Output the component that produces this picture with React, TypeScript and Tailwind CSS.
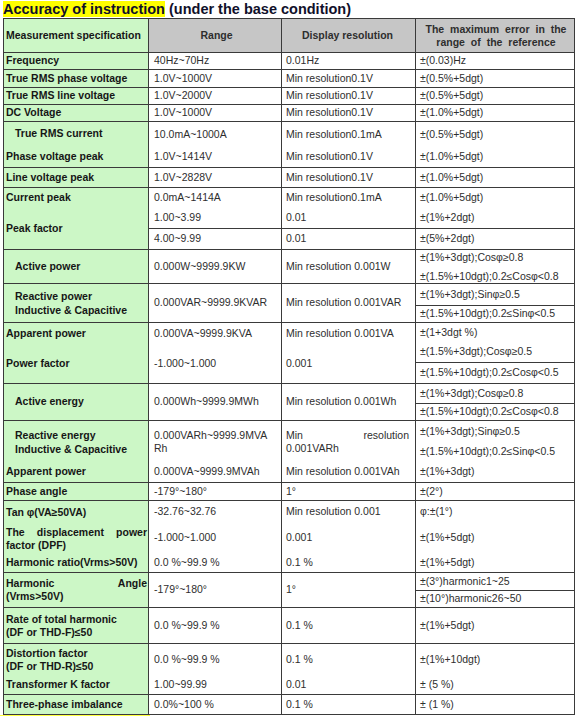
import React from "react";

type Line = { t: React.ReactNode; h?: string; b?: boolean; x?: string };
type CellSpec = React.ReactNode | Line[];
type Row = { h: string; hdr?: boolean; c: CellSpec[] };

const BORDER = "border-[#3a3a3a]";

const colCls = [
  "w-[145px] shrink-0 bg-[#ccf7c6] font-bold text-[#161616] border-r border-[#3a3a3a]",
  "w-[133px] shrink-0 border-r border-[#3a3a3a] text-[#2e2e2e]",
  "w-[134px] shrink-0 border-r border-[#3a3a3a] text-[#2e2e2e]",
  "flex-1 min-w-0 text-[#2e2e2e]",
];
const padCls = ["pl-[2px] pr-[1px]", "pl-[5px] pr-[2px]", "pl-[4px] pr-[6px]", "pl-[4px] pr-[2px]"];

const In = ({ children }: { children: React.ReactNode }) => (
  <span className="ml-[9px]">{children}</span>
);

const Two = ({ a, b, indent }: { a: React.ReactNode; b: React.ReactNode; indent?: boolean }) => (
  <div className={indent ? "leading-[14px] pl-[9px]" : "leading-[13px]"}>
    <div>{a}</div>
    <div>{b}</div>
  </div>
);

const Just = ({ words, second }: { words: string[]; second: React.ReactNode }) => (
  <div className="w-full leading-[13px]">
    <div className="flex justify-between">
      {words.map((w) => (
        <span key={w}>{w}</span>
      ))}
    </div>
    <div>{second}</div>
  </div>
);

const rows: Row[] = [
  {
    h: "h-[34px]",
    hdr: true,
    c: [
      "Measurement specification",
      [{ t: "Range", x: "justify-center" }],
      [{ t: "Display resolution", x: "justify-center" }],
      [
        {
          t: (
            <div className="w-full text-center leading-[13px] [word-spacing:3px]">
              <div>The maximum error in the</div>
              <div>range of the reference</div>
            </div>
          ),
        },
      ],
    ],
  },
  { h: "h-[17px]", c: ["Frequency", "40Hz~70Hz", "0.01Hz", "±(0.03)Hz"] },
  { h: "h-[18px]", c: ["True RMS phase voltage", "1.0V~1000V", "Min resolution0.1V", "±(0.5%+5dgt)"] },
  { h: "h-[17px]", c: ["True RMS line voltage", "1.0V~2000V", "Min resolution0.1V", "±(0.5%+5dgt)"] },
  { h: "h-[17px]", c: ["DC Voltage", "1.0V~1000V", "Min resolution0.1V", "±(1.0%+5dgt)"] },
  {
    h: "h-[46px]",
    c: [
      [{ t: <In>True RMS current</In>, h: "h-[24px]" }, { t: "Phase voltage peak" }],
      [{ t: "10.0mA~1000A", h: "h-[25px]" }, { t: "1.0V~1414V" }],
      [{ t: "Min resolution0.1mA", h: "h-[25px]" }, { t: "Min resolution0.1V" }],
      [{ t: "±(0.5%+5dgt)", h: "h-[25px]" }, { t: "±(1.0%+5dgt)" }],
    ],
  },
  { h: "h-[20px]", c: ["Line voltage peak", "1.0V~2828V", "Min resolution0.1V", "±(1.0%+5dgt)"] },
  {
    h: "h-[62px]",
    c: [
      [{ t: "Current peak", h: "h-[20px]" }, { t: "Peak factor" }],
      [{ t: "0.0mA~1414A", h: "h-[20px]" }, { t: "1.00~3.99", h: "h-[21px]", b: true }, { t: "4.00~9.99" }],
      [{ t: "Min resolution0.1mA", h: "h-[20px]" }, { t: "0.01", h: "h-[21px]", b: true }, { t: "0.01" }],
      [{ t: "±(1.0%+5dgt)", h: "h-[20px]" }, { t: "±(1%+2dgt)", h: "h-[21px]", b: true }, { t: "±(5%+2dgt)" }],
    ],
  },
  {
    h: "h-[34px]",
    c: [
      <In>Active power</In>,
      "0.000W~9999.9KW",
      "Min resolution 0.001W",
      [{ t: "±(1%+3dgt);Cosφ≥0.8", h: "h-[15px]" }, { t: "±(1.5%+10dgt);0.2≤Cosφ<0.8", x: "pt-[4px]" }],
    ],
  },
  {
    h: "h-[39px]",
    c: [
      [{ t: <Two a="Reactive power" b="Inductive & Capacitive" indent /> }],
      "0.000VAR~9999.9KVAR",
      "Min resolution 0.001VAR",
      [{ t: "±(1%+3dgt);Sinφ≥0.5", h: "h-[23px]", b: true }, { t: "±(1.5%+10dgt);0.2≤Sinφ<0.5" }],
    ],
  },
  {
    h: "h-[61px]",
    c: [
      [{ t: "Apparent power", h: "h-[22px]" }, { t: "Power factor" }],
      [{ t: "0.000VA~9999.9KVA", h: "h-[22px]" }, { t: "-1.000~1.000" }],
      [{ t: "Min resolution 0.001VA", h: "h-[22px]" }, { t: "0.001" }],
      [
        { t: "±(1+3dgt %)", h: "h-[19px]" },
        { t: "±(1.5%+3dgt);Cosφ≥0.5", h: "h-[21px]", b: true },
        { t: "±(1.5%+10dgt);0.2≤Cosφ<0.5" },
      ],
    ],
  },
  {
    h: "h-[37px]",
    c: [
      <In>Active energy</In>,
      "0.000Wh~9999.9MWh",
      "Min resolution 0.001Wh",
      [{ t: "±(1%+3dgt);Cosφ≥0.8", h: "h-[20px]", b: true }, { t: "±(1.5%+10dgt);0.2≤Cosφ<0.8" }],
    ],
  },
  {
    h: "h-[62px]",
    c: [
      [{ t: <Two a="Reactive energy" b="Inductive & Capacitive" indent />, h: "h-[41px]" }, { t: "Apparent power" }],
      [{ t: <Two a="0.000VARh~9999.9MVA" b="Rh" />, h: "h-[41px]" }, { t: "0.000VA~9999.9MVAh" }],
      [{ t: <Just words={["Min", "resolution"]} second="0.001VARh" />, h: "h-[41px]" }, { t: "Min resolution 0.001VAh" }],
      [
        { t: "±(1%+3dgt);Sinφ≥0.5", h: "h-[21px]" },
        { t: "±(1.5%+10dgt);0.2≤Sinφ<0.5", h: "h-[20px]" },
        { t: "±(1%+3dgt)" },
      ],
    ],
  },
  { h: "h-[18px]", c: ["Phase angle", "-179°~180°", "1°", "±(2°)"] },
  {
    h: "h-[72px]",
    c: [
      [
        { t: "Tan φ(VA≥50VA)", h: "h-[24px]" },
        { t: <Just words={["The", "displacement", "power"]} second="factor (DPF)" />, h: "h-[28px]" },
        { t: "Harmonic ratio(Vrms>50V)" },
      ],
      [{ t: "-32.76~32.76", h: "h-[22px]" }, { t: "-1.000~1.000", h: "h-[30px]" }, { t: "0.0 %~99.9 %" }],
      [{ t: "Min resolution 0.001", h: "h-[22px]" }, { t: "0.001", h: "h-[30px]" }, { t: "0.1 %" }],
      [{ t: "φ:±(1°)", h: "h-[22px]" }, { t: "±(1%+5dgt)", h: "h-[30px]" }, { t: "±(1%+5dgt)" }],
    ],
  },
  {
    h: "h-[35px]",
    c: [
      [{ t: <Just words={["Harmonic", "Angle"]} second="(Vrms>50V)" /> }],
      "-179°~180°",
      "1°",
      [{ t: "±(3°)harmonic1~25", h: "h-[21px]", b: true }, { t: "±(10°)harmonic26~50" }],
    ],
  },
  {
    h: "h-[36px]",
    c: [
      [{ t: <Two a="Rate of total harmonic" b="(DF or THD-F)≤50" /> }],
      "0.0 %~99.9 %",
      "0.1 %",
      "±(1%+5dgt)",
    ],
  },
  {
    h: "h-[51px]",
    c: [
      [{ t: <Two a="Distortion factor" b="(DF or THD-R)≤50" />, h: "h-[32px]" }, { t: "Transformer K factor" }],
      [{ t: "0.0 %~99.9 %", h: "h-[32px]" }, { t: "1.00~99.99" }],
      [{ t: "0.1 %", h: "h-[32px]" }, { t: "0.01" }],
      [{ t: "±(1%+10dgt)", h: "h-[32px]" }, { t: "± (5 %)" }],
    ],
  },
  { h: "h-[20px]", c: ["Three-phase imbalance", "0.0%~100 %", "0.1 %", "± (1 %)"] },
];

function Cell({ spec, i, hdr }: { spec: CellSpec; i: number; hdr?: boolean }) {
  const lines: Line[] = Array.isArray(spec) ? (spec as Line[]) : [{ t: spec as React.ReactNode }];
  const hdrCls = hdr && i > 0 ? "bg-[#c6c6c6] font-bold text-[#1a1a1a]" : "";
  return (
    <div className={`${colCls[i]} ${hdrCls} flex flex-col`}>
      {lines.map((l, k) => (
        <div
          key={k}
          className={`${l.h ?? "flex-1"} flex items-center whitespace-nowrap ${padCls[i]} ${
            l.b ? `border-b ${BORDER}` : ""
          } ${l.x ?? ""}`}
        >
          {l.t}
        </div>
      ))}
    </div>
  );
}

export default function App() {
  return (
    <div className="w-[576px] h-[716px] overflow-hidden bg-white font-['Liberation_Sans',Arial,sans-serif] text-[10.5px]">
      <div className="h-[18px] pl-[3px] flex items-center font-bold text-[14.5px] leading-[16px] text-[#10102a]">
        <span className="bg-[#ffff00]">Accuracy of instruction</span>
        <span className="whitespace-pre"> (under the base condition)</span>
      </div>
      <div className="ml-[3px] w-[572px] border-t border-l border-r border-[#3a3a3a]">
        {rows.map((r, idx) => (
          <div key={idx} className={`${r.h} flex border-b ${BORDER}`}>
            {r.c.map((c, i) => (
              <Cell key={i} spec={c} i={i} hdr={r.hdr} />
            ))}
          </div>
        ))}
      </div>
      <div className="h-[3px] w-[150px] bg-[#ffff40]" />
    </div>
  );
}
